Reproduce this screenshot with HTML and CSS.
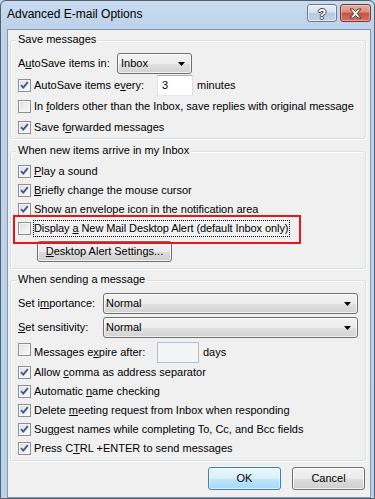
FILE: index.html
```html
<!DOCTYPE html>
<html>
<head>
<meta charset="utf-8">
<link rel="stylesheet" href="styles.css">
</head>
<body>
<div class="window">
  <div class="titlebar">
    <div class="title">Advanced E-mail Options</div>
    <div class="tb-btn help"><span class="qm">?</span></div>
    <div class="tb-btn close">
      <svg width="13" height="11" viewBox="-1 -1 13 11"><path d="M0 0H3L5.5 2.6L8 0H11L7.2 4.5L11 9H8L5.5 6.4L3 9H0L3.8 4.5Z" fill="#fff" stroke="#4a3b3b" stroke-width="1" stroke-linejoin="round"/></svg>
    </div>
  </div>
  <div class="client">
    <div class="group g1">
      <div class="gtitle">Save messages</div>
      <div class="row h21 mt7">
        <span class="lbl w99">A<u>u</u>toSave items in:</span>
        <div class="combo w75"><span class="ctext">Inbox</span><svg class="arrow" width="7" height="4" viewBox="0 0 7 4"><path d="M0 0H7L3.5 4Z" fill="#000"/></svg></div>
      </div>
      <div class="row h22">
        <span class="cb"><svg width="11" height="11" viewBox="0 0 11 11"><path d="M2 5.2L4.3 7.6L8.8 2.2" fill="none" stroke="#3d5a93" stroke-width="1.9"/></svg></span>
        <span class="lbl w123">AutoSave items e<u>v</u>ery:</span>
        <div class="edit w36">3</div>
        <span class="after">minutes</span>
      </div>
      <div class="row h21">
        <span class="cb"></span>
        <span class="lbl">In <u>f</u>olders other than the Inbox, save replies with original message</span>
      </div>
      <div class="row h21">
        <span class="cb"><svg width="11" height="11" viewBox="0 0 11 11"><path d="M2 5.2L4.3 7.6L8.8 2.2" fill="none" stroke="#3d5a93" stroke-width="1.9"/></svg></span>
        <span class="lbl">Save f<u>o</u>rwarded messages</span>
      </div>
    </div>

    <div class="group g2">
      <div class="gtitle">When new items arrive in my Inbox</div>
      <div class="row h19 mt5">
        <span class="cb"><svg width="11" height="11" viewBox="0 0 11 11"><path d="M2 5.2L4.3 7.6L8.8 2.2" fill="none" stroke="#3d5a93" stroke-width="1.9"/></svg></span>
        <span class="lbl"><u>P</u>lay a sound</span>
      </div>
      <div class="row h19">
        <span class="cb"><svg width="11" height="11" viewBox="0 0 11 11"><path d="M2 5.2L4.3 7.6L8.8 2.2" fill="none" stroke="#3d5a93" stroke-width="1.9"/></svg></span>
        <span class="lbl"><u>B</u>riefly change the mouse cursor</span>
      </div>
      <div class="row h19">
        <span class="cb"><svg width="11" height="11" viewBox="0 0 11 11"><path d="M2 5.2L4.3 7.6L8.8 2.2" fill="none" stroke="#3d5a93" stroke-width="1.9"/></svg></span>
        <span class="lbl">Show an envelope icon in the notification area</span>
      </div>
      <div class="row h19 marked">
        <span class="cb"></span>
        <span class="lbl focus">Display <u>a</u> New Mail Desktop Alert (default Inbox only)</span>
      </div>
      <div class="btnrow">
        <div class="btn alert-btn"><u>D</u>esktop Alert Settings...</div>
      </div>
    </div>

    <div class="group g3">
      <div class="gtitle">When sending a message</div>
      <div class="row h21 mt7">
        <span class="lbl w85">Set i<u>m</u>portance:</span>
        <div class="combo wide"><span class="ctext n">Normal</span><svg class="arrow" width="7" height="4" viewBox="0 0 7 4"><path d="M0 0H7L3.5 4Z" fill="#000"/></svg></div>
      </div>
      <div class="row h21 mt3">
        <span class="lbl w85"><u>S</u>et sensitivity:</span>
        <div class="combo wide"><span class="ctext n">Normal</span><svg class="arrow" width="7" height="4" viewBox="0 0 7 4"><path d="M0 0H7L3.5 4Z" fill="#000"/></svg></div>
      </div>
      <div class="row h21 mt4">
        <span class="cb up"></span>
        <span class="lbl w123">Messages e<u>x</u>pire after:</span>
        <div class="edit disabled w42"></div>
        <span class="after">days</span>
      </div>
      <div class="row h19">
        <span class="cb"><svg width="11" height="11" viewBox="0 0 11 11"><path d="M2 5.2L4.3 7.6L8.8 2.2" fill="none" stroke="#3d5a93" stroke-width="1.9"/></svg></span>
        <span class="lbl">Allow <u>c</u>omma as address separator</span>
      </div>
      <div class="row h19">
        <span class="cb"><svg width="11" height="11" viewBox="0 0 11 11"><path d="M2 5.2L4.3 7.6L8.8 2.2" fill="none" stroke="#3d5a93" stroke-width="1.9"/></svg></span>
        <span class="lbl">Automatic <u>n</u>ame checking</span>
      </div>
      <div class="row h19">
        <span class="cb"><svg width="11" height="11" viewBox="0 0 11 11"><path d="M2 5.2L4.3 7.6L8.8 2.2" fill="none" stroke="#3d5a93" stroke-width="1.9"/></svg></span>
        <span class="lbl">Delete <u>m</u>eeting request from Inbox when responding</span>
      </div>
      <div class="row h19">
        <span class="cb"><svg width="11" height="11" viewBox="0 0 11 11"><path d="M2 5.2L4.3 7.6L8.8 2.2" fill="none" stroke="#3d5a93" stroke-width="1.9"/></svg></span>
        <span class="lbl">Su<u>g</u>gest names while completing To, Cc, and Bcc fields</span>
      </div>
      <div class="row h19">
        <span class="cb"><svg width="11" height="11" viewBox="0 0 11 11"><path d="M2 5.2L4.3 7.6L8.8 2.2" fill="none" stroke="#3d5a93" stroke-width="1.9"/></svg></span>
        <span class="lbl">Press C<u>T</u>RL +ENTER to send messages</span>
      </div>
    </div>

    <div class="footer">
      <div class="btn default">OK</div>
      <div class="btn">Cancel</div>
    </div>
  </div>
</div>
</body>
</html>
```

FILE: styles.css
```css
* { box-sizing: border-box; }
html, body { margin: 0; padding: 0; }
body { width: 375px; height: 499px; overflow: hidden; background: #bcd3ec; }

.window {
  width: 375px;
  height: 499px;
  border: 1px solid #56616e;
  border-radius: 6px 6px 0 0;
  background: linear-gradient(#c9dbef 0px, #bdd3eb 28px, #b9d1ea 100%);
  padding: 0 3px 0 6px;
  display: flex;
  flex-direction: column;
}

.titlebar {
  height: 28px;
  display: flex;
  align-items: flex-start;
  flex: none;
}
.title {
  flex: 1;
  margin-top: 6px;
  font: 12px/14px "Liberation Sans", Arial, sans-serif;
  color: #000;
}
.tb-btn {
  margin-top: 3px;
  height: 18px;
  border-radius: 3px;
  display: flex;
  align-items: center;
  justify-content: center;
}
.help {
  width: 30px;
  margin-right: 3px;
  border: 1px solid #6a7b90;
  background: linear-gradient(#e8eff7 0%, #d6e2ef 45%, #b6c9de 50%, #c2d3e5 100%);
  box-shadow: inset 0 0 0 1px rgba(255,255,255,.55);
}
.qm {
  font: bold 14px/14px "Liberation Sans", Arial, sans-serif;
  color: #fff;
  text-shadow: 1px 0 0 #3f4a57, -1px 0 0 #3f4a57, 0 1px 0 #3f4a57, 0 -1px 0 #3f4a57;
  margin-top: 1px;
}
.close {
  width: 31px;
  border: 1px solid #6e3b36;
  background: linear-gradient(#eab0a3 0%, #dc8a7a 45%, #c4503f 50%, #d77362 100%);
  box-shadow: inset 0 0 0 1px rgba(255,220,210,.45);
}

.client {
  flex: 1;
  border: 1px solid #8396ab;
  background: #f0f0f0;
  padding: 0 4px 0 2px;
  font: 11px/13px "Liberation Sans", Arial, sans-serif;
  color: #000;
}

.group {
  border: 1px solid #d5dfe5;
  border-radius: 3px;
  box-shadow: inset 1px 1px 0 #fff, 1px 1px 0 #fff;
  padding: 0 4px 0 7px;
}
.g1 { margin-top: 10px; }
.g2 { margin-top: 12px; padding-bottom: 6px; }
.g3 { margin-top: 11px; padding-bottom: 2px; }

.gtitle {
  margin-top: -8px;
  margin-left: -2px;
  padding: 0 2px;
  width: fit-content;
  height: 13px;
  background: #f0f0f0;
  white-space: nowrap;
}

.row { display: flex; align-items: center; white-space: nowrap; }
.h19 { height: 19px; }
.h21 { height: 21px; }
.h22 { height: 22px; }
.mt3 { margin-top: 3px; }
.mt4 { margin-top: 4px; }
.mt5 { margin-top: 5px; }
.mt7 { margin-top: 7px; }

.lbl { display: block; }
.cb + .lbl { margin-left: 3px; }
.w99 { width: 99px; flex: none; }
.w85 { width: 85px; flex: none; }
.w123 { width: 123px; flex: none; }

.cb {
  width: 13px;
  height: 13px;
  flex: none;
  border: 1px solid #8e8f8f;
  background: linear-gradient(135deg, #d9dbde 0%, #eeeff0 55%, #fbfbfb 100%);
  box-shadow: inset 0 0 0 1px #f6f6f6;
  display: flex;
}
.cb svg { display: block; }
.cb.up { margin-top: -6px; }

.combo {
  height: 21px;
  border: 1px solid #707070;
  border-radius: 3px;
  background: linear-gradient(#f3f3f3 0%, #ececec 50%, #e0e0e0 51%, #d3d3d3 100%);
  box-shadow: inset 0 0 0 1px rgba(255,255,255,.7);
  display: flex;
  align-items: center;
  padding: 0 6px 0 3px;
  flex: none;
}
.w75 { width: 75px; }
.wide { width: 255px; }
.ctext { flex: 1; }
.ctext.n { margin-left: -1px; }
.arrow { display: block; flex: none; }

.edit {
  height: 21px;
  background: #fff;
  border: 1px solid #abadb3;
  border-left-color: #e2e3ea;
  border-right-color: #dbdfe6;
  border-bottom-color: #e3e9ef;
  padding: 3px 0 0 4px;
  flex: none;
}
.edit.disabled {
  background: #f4f4f4;
  border-color: #b2c0cd;
}
.w36 { width: 36px; }
.w42 { width: 42px; }
.after { margin-left: 4px; }

.marked { position: relative; }
.marked::after {
  content: "";
  position: absolute;
  left: -5px;
  top: -4px;
  width: 284px;
  height: 25px;
  border: 2px solid #e5161c;
}
.lbl.focus {
  margin-left: 2px;
  border: 1px dotted #000;
  padding: 1px 1px 1px 0;
  letter-spacing: -0.08px;
}

.btn {
  height: 23px;
  border: 1px solid #707070;
  border-radius: 3px;
  background: linear-gradient(#f2f2f2 0%, #ebebeb 50%, #dddddd 51%, #cfcfcf 100%);
  box-shadow: inset 0 0 0 1px rgba(255,255,255,.75);
  display: flex;
  align-items: center;
  justify-content: center;
  white-space: nowrap;
}
.btnrow { display: flex; margin-top: 3px; }
.alert-btn { width: 135px; height: 21px; margin-left: 19px; }

.footer {
  display: flex;
  justify-content: flex-end;
  gap: 11px;
  margin-top: 6px;
  padding-right: 1px;
}
.footer .btn { width: 73px; }
.btn.default {
  border-color: #3c7fb1;
  background: linear-gradient(#eaf6fd 0%, #d9f0fc 50%, #bee6fd 51%, #a7d9f5 100%);
  box-shadow: inset 0 0 0 1px rgba(255,255,255,.6);
}
```
